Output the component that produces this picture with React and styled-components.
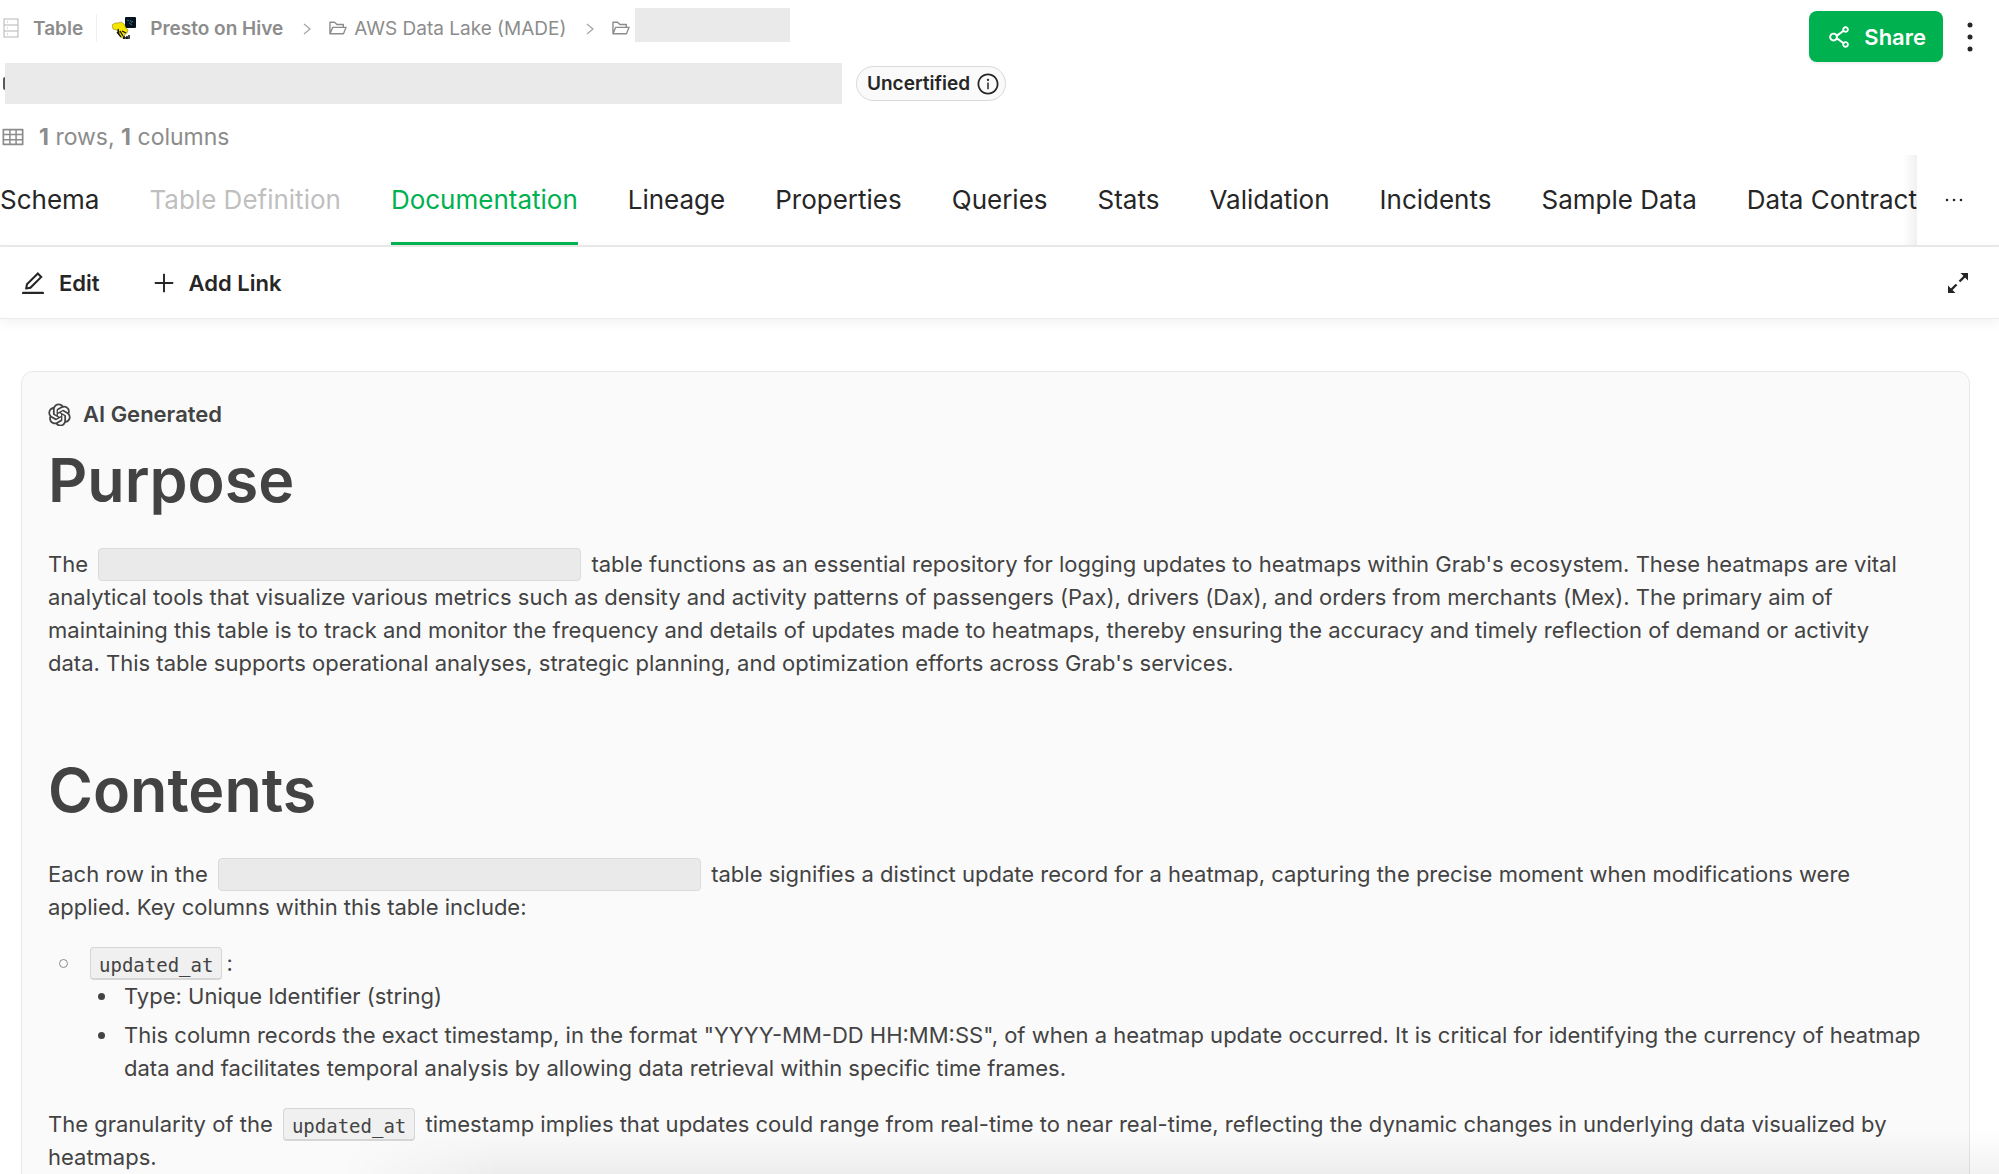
import React from "react";
import { AiOutlineEdit, AiOutlineFolderOpen, AiOutlinePlus, AiOutlineShareAlt, AiOutlineInfoCircle, AiOutlineTable, AiOutlineOpenAI } from "react-icons/ai";
import styled, { createGlobalStyle } from "styled-components";

const GlobalStyle = createGlobalStyle`
  *, *::before, *::after {
    box-sizing: border-box;
  }
  body {
    margin: 0;
    background-color: white;
    color: #262626;
    font-family: Inter, "Liberation Sans", sans-serif;
    overflow: hidden;
  }
  button {
    border: none;
    background: none;
    padding: 0;
    color: inherit;
    font-family: inherit;
    cursor: pointer;
  }
  svg {
    flex-shrink: 0;
  }
`;

const Container = styled.div`
  height: 100vh;
  overflow: hidden;
  position: relative;
`;
const Header = styled.header`
  display: flex;
  justify-content: space-between;
  align-items: flex-start;
  padding: 8px 22px 0 0;
`;
const Info = styled.div`
  color: #8c8c8c;
`;
const Breadcrumb = styled.nav`
  display: flex;
  align-items: center;
  height: 40px;
  padding-left: 3px;
  font-size: 19px;
`;
const Kind = styled.span`
  display: flex;
  align-items: center;
  gap: 14px;
  height: 28px;
  padding-right: 13px;
  border-right: 1px solid #f0f0f0;
  font-weight: 600;
`;
const Platform = styled.a`
  display: flex;
  align-items: center;
  gap: 14px;
  margin-left: 15px;
  color: inherit;
  text-decoration: none;
  font-weight: 600;
`;
const Crumb = styled.a`
  display: flex;
  align-items: center;
  gap: ${(props) => (props.$tight ? "4px" : "6px")};
  color: inherit;
  text-decoration: none;
`;
const Mask = styled.span`
  width: 155px;
  height: 34px;
  margin-bottom: 6px;
  background-color: #eaeaea;
`;
const TitleRow = styled.div`
  display: flex;
  align-items: center;
  gap: 14px;
  margin-top: 15px;
  padding-left: 5px;
`;
const TitleMask = styled.span`
  position: relative;
  width: 837px;
  height: 41px;
  background-color: #eaeaea;

  &::before {
    content: "";
    position: absolute;
    top: 14px;
    left: -2px;
    width: 2px;
    height: 13px;
    border-radius: 2px 0 0 2px;
    background-color: #595959;
  }
`;
const Certification = styled.span`
  display: flex;
  align-items: center;
  gap: 6px;
  height: 35px;
  padding: 0 5px 0 10px;
  border: 1px solid #d9d9d9;
  border-radius: 18px;
  background-color: #fafafa;
  color: #262626;
  font-size: 19px;
  font-weight: 600;
`;
const Stats = styled.div`
  display: flex;
  align-items: center;
  gap: 14px;
  margin-top: 17px;
  padding-left: 1px;
  font-size: 23px;
  line-height: 32px;

  b {
    font-weight: 700;
  }
`;
const Actions = styled.div`
  display: flex;
  align-items: center;
  gap: 20px;
  padding-top: 3px;
`;
const ShareButton = styled.button`
  display: flex;
  align-items: center;
  gap: 11px;
  height: 51px;
  padding: 0 17px 0 16px;
  border-radius: 8px;
  background-color: #00b14f;
  box-shadow: 0 2px 2px rgba(0, 0, 0, 0.06);
  color: white;
  font-size: 22px;
  font-weight: 600;
`;
const MoreButton = styled.button`
  display: flex;
`;

const TabBar = styled.div`
  display: flex;
  margin-top: 2px;
  border-bottom: 2px solid #ebebeb;
`;
const Tabs = styled.div`
  flex: 1;
  display: flex;
  gap: 50px;
  height: 90px;
  overflow: hidden;
  position: relative;

  &::after {
    content: "";
    position: absolute;
    top: 0;
    right: 0;
    width: 14px;
    height: 100%;
    background: linear-gradient(to right, rgba(0, 0, 0, 0), rgba(0, 0, 0, 0.06));
  }
`;
const Tab = styled.button`
  flex-shrink: 0;
  padding-top: 1px;
  border-bottom: 3px solid ${(props) => (props.$active ? "#00b14f" : "transparent")};
  color: ${(props) => (props.$active ? "#00b14f" : "#262626")};
  font-size: 26px;

  &:disabled {
    color: #bfbfbf;
  }
`;
const TabsMore = styled.button`
  display: flex;
  align-items: center;
  justify-content: center;
  width: 82px;
  padding-right: 8px;
`;

const Toolbar = styled.div`
  display: flex;
  align-items: center;
  gap: 51px;
  height: 72px;
  padding: 0 30px 0 19px;
  border-bottom: 1px solid #ebebeb;
  box-shadow: 0 3px 12px rgba(0, 0, 0, 0.06);
`;
const ToolButton = styled.button`
  display: flex;
  align-items: center;
  gap: 12px;
  font-size: 22px;
  font-weight: 600;
`;
const ExpandButton = styled.button`
  display: flex;
  margin-left: auto;
`;

const Card = styled.article`
  margin: 52px 29px 0 21px;
  padding: 26px 46px 40px 26px;
  border: 1px solid #e8e8e8;
  border-radius: 12px;
  background-color: #fafafa;
  color: #434343;
  font-size: 22px;
  line-height: 33px;
`;
const Generated = styled.div`
  display: flex;
  align-items: center;
  gap: 12px;
  font-weight: 600;
`;
const Heading = styled.h1`
  margin: ${(props) => (props.$spaced ? "73px" : "12px")} 0 31px;
  font-size: 61px;
  font-weight: 600;
  line-height: 74px;
`;
const Text = styled.p`
  margin: 0 0 23px;
`;
const NameMask = styled.span`
  display: inline-block;
  width: 483px;
  height: 33px;
  margin: 0 4px;
  border: 1px solid #dadada;
  border-radius: 4px;
  background-color: #eaeaea;
  vertical-align: top;
`;
const Code = styled.code`
  display: inline-block;
  height: 33px;
  margin: 0 4px 0 ${(props) => (props.$first ? "0" : "4px")};
  padding: 2px 8px 0;
  border: 1px solid #d6d6d6;
  border-bottom-width: 2px;
  border-radius: 4px;
  background-color: #f0f0f0;
  font-family: "DejaVu Sans Mono", "Liberation Mono", monospace;
  font-size: 19px;
  line-height: 30px;
  vertical-align: top;
`;
const List = styled.ul`
  margin: 0 0 23px;
  padding-left: 42px;
  list-style: none;

  > li::before {
    content: "";
    display: inline-block;
    width: 9px;
    height: 9px;
    margin: 0 22px 0 -31px;
    border: 1px solid #8c8c8c;
    border-radius: 50%;
    vertical-align: 3px;
  }
`;
const SubList = styled.ul`
  margin: 0;
  padding-left: 34px;
  list-style: none;

  > li::before {
    content: "";
    display: inline-block;
    width: 7px;
    height: 7px;
    margin: 0 19px 0 -26px;
    border-radius: 50%;
    background-color: #434343;
    vertical-align: 4px;
  }
  li + li {
    margin-top: 6px;
  }
`;
const BottomShade = styled.div`
  position: absolute;
  left: 340px;
  right: 0;
  bottom: 0;
  height: 44px;
  background: linear-gradient(to bottom, rgba(0, 0, 0, 0), rgba(0, 0, 0, 0.05));
  mask-image: linear-gradient(to right, transparent, black 160px);
  pointer-events: none;
`;
const SeparatorIcon = styled.svg`
  margin: 2px 17px 0 20px;
`;

const tabs = [
  "Schema",
  "Table Definition",
  "Documentation",
  "Lineage",
  "Properties",
  "Queries",
  "Stats",
  "Validation",
  "Incidents",
  "Sample Data",
  "Data Contract",
];

const Separator = () => (
  <SeparatorIcon width="8" height="12" viewBox="0 0 8 12" fill="none" stroke="#a6a6a6" strokeWidth="1.3">
    <path d="M1 1L7 6L1 11" />
  </SeparatorIcon>
);

const TableIcon = () => (
  <svg width="16" height="20" viewBox="0 0 16 20" fill="none" stroke="#b5b5b5">
    <rect x="1" y="1" width="14" height="18" />
    <path d="M1 7H15M1 13H15M4 4H5M4 10H5M4 16H5" />
  </svg>
);

const HiveLogo = () => (
  <svg width="24" height="24" viewBox="0 0 24 24">
    <rect x="13" y="1" width="11" height="11" rx="1" fill="#05131f" />
    <path d="M15 4l2 1M18 4l2 3M17 7l3 2M20 5l1 1" stroke="#1b7486" />
    <path d="M0 9L3 7L6 7L9 6L12 8L14 12L16 14L15 17L12 19L13 21L10 22L7 19L5 14L1 13Z" fill="#f4e600" stroke="#78720c" strokeWidth="0.5" />
    <path d="M6 13L7 18M8 15L11 20M5 16L9 21M14 17L10 15" stroke="#171500" strokeWidth="1.3" />
    <path d="M11 22h7M12 20v3M15 20v3M18 20h-2" stroke="#111" strokeWidth="1.5" />
  </svg>
);

const Dots = ({ vertical }) => (
  <svg width={vertical ? 14 : 20} height={vertical ? 32 : 6} fill="#262626">
    {[0, 1, 2].map((i) =>
      vertical ? (
        <circle key={i} cx="7" cy={4 + i * 12} r="2.5" />
      ) : (
        <circle key={i} cx={3 + i * 7} cy="3" r="1.3" />
      )
    )}
  </svg>
);

const ExpandIcon = () => (
  <svg width="22" height="22" viewBox="0 0 22 22" fill="#262626" stroke="#262626">
    <path d="M12.500 9.500L18 4M9.500 12.500L4 18" strokeWidth="2.4" />
    <path d="M13.500 1H21V8.500ZM1 13.500V21H8.500Z" stroke="none" />
  </svg>
);

const App = () => {
  return (
    <Container>
      <GlobalStyle />
      <Header>
        <Info>
          <Breadcrumb aria-label="Breadcrumb">
            <Kind>
              <TableIcon />
              Table
            </Kind>
            <Platform href="#">
              <HiveLogo />
              Presto on Hive
            </Platform>
            <Separator />
            <Crumb href="#">
              <AiOutlineFolderOpen size={20} />
              AWS Data Lake (MADE)
            </Crumb>
            <Separator />
            <Crumb href="#" $tight aria-label="Folder">
              <AiOutlineFolderOpen size={20} />
              <Mask />
            </Crumb>
          </Breadcrumb>
          <TitleRow>
            <TitleMask />
            <Certification>
              Uncertified
              <AiOutlineInfoCircle size={24} />
            </Certification>
          </TitleRow>
          <Stats>
            <AiOutlineTable size={24} />
            <span>
              <b>1</b> rows, <b>1</b> columns
            </span>
          </Stats>
        </Info>
        <Actions>
          <ShareButton>
            <AiOutlineShareAlt size={28} />
            Share
          </ShareButton>
          <MoreButton aria-label="More">
            <Dots vertical />
          </MoreButton>
        </Actions>
      </Header>
      <TabBar>
        <Tabs role="tablist">
          {tabs.map((tab) => (
            <Tab
              key={tab}
              role="tab"
              aria-selected={tab === "Documentation"}
              $active={tab === "Documentation"}
              disabled={tab === "Table Definition"}
            >
              {tab}
            </Tab>
          ))}
        </Tabs>
        <TabsMore aria-label="More tabs">
          <Dots />
        </TabsMore>
      </TabBar>
      <Toolbar>
        <ToolButton>
          <AiOutlineEdit size={28} />
          Edit
        </ToolButton>
        <ToolButton>
          <AiOutlinePlus size={26} />
          Add Link
        </ToolButton>
        <ExpandButton aria-label="Expand">
          <ExpandIcon />
        </ExpandButton>
      </Toolbar>
      <Card>
        <Generated>
          <AiOutlineOpenAI size={23} viewBox="112 112 800 800" />
          AI Generated
        </Generated>
        <Heading>Purpose</Heading>
        <Text>
          The <NameMask /> table functions as an essential repository for logging updates to
          heatmaps within Grab's ecosystem. These heatmaps are vital analytical tools that
          visualize various metrics such as density and activity patterns of passengers (Pax),
          drivers (Dax), and orders from merchants (Mex). The primary aim of maintaining this
          table is to track and monitor the frequency and details of updates made to heatmaps,
          thereby ensuring the accuracy and timely reflection of demand or activity data. This
          table supports operational analyses, strategic planning, and optimization efforts across
          Grab's services.
        </Text>
        <Heading $spaced>Contents</Heading>
        <Text>
          Each row in the <NameMask /> table signifies a distinct update record for a heatmap,
          capturing the precise moment when modifications were applied. Key columns within this
          table include:
        </Text>
        <List>
          <li>
            <Code $first>updated_at</Code>:
            <SubList>
              <li>Type: Unique Identifier (string)</li>
              <li>
                This column records the exact timestamp, in the format "YYYY-MM-DD HH:MM:SS", of
                when a heatmap update occurred. It is critical for identifying the currency of
                heatmap data and facilitates temporal analysis by allowing data retrieval within
                specific time frames.
              </li>
            </SubList>
          </li>
        </List>
        <Text>
          The granularity of the <Code>updated_at</Code> timestamp implies that updates could
          range from real-time to near real-time, reflecting the dynamic changes in underlying
          data visualized by heatmaps.
        </Text>
      </Card>
      <BottomShade />
    </Container>
  );
};

export default App;
